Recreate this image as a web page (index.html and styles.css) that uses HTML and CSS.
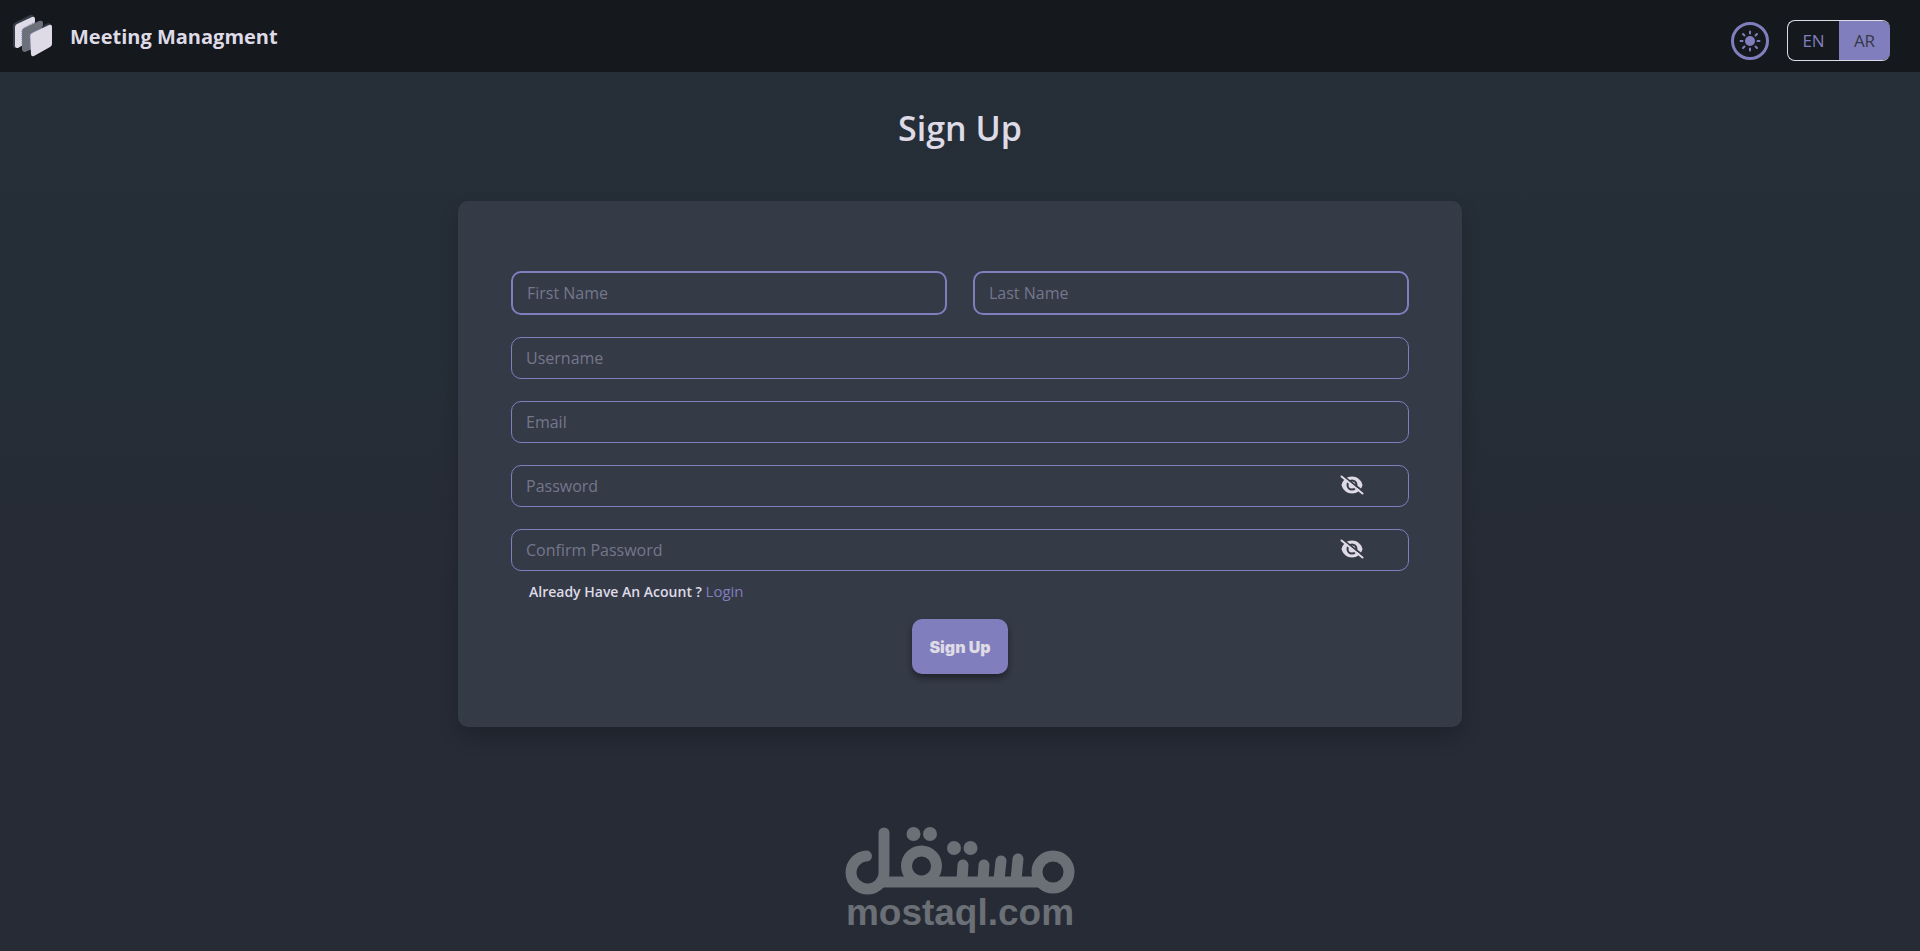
FILE: index.html
```html
<!DOCTYPE html>
<html lang="en">
<head>
  <meta charset="UTF-8">
  <meta name="viewport" content="width=device-width, initial-scale=1.0">
  <title>Sign Up - Meeting Managment</title>
  <link rel="stylesheet" href="styles.css">
</head>
<body>
  <header class="navbar">
    <a class="brand" href="/">
      <svg class="brand-logo" viewBox="0 0 40 44" aria-hidden="true">
        <path class="logo-shade" d="M0 12Q0 9 3 8L17 1Q20 0 21 3V24L2 34Q0 34 0 31Z"/>
        <path class="logo-page" d="M2 13Q2 11 4 10L19 3Q22 2 22 5V24L5 34Q2 34 2 32Z"/>
        <path class="logo-mid" d="M9 17Q9 15 11 14L26 7Q30 6 30 9V30L12 38Q9 38 9 35Z"/>
        <path class="logo-shade" d="M28 13L35 9Q38 9 38 12L30 15Z"/>
        <path class="logo-page" d="M17 22Q17 20 19 19L36 11Q39 10 39 13V30Q39 32 37 33L21 42Q18 43 18 40Z"/>
        <path class="logo-edge" d="M9 30V17Q9 15 11 14L22 8M17 36V22Q17 20 19 19L30 13"/>
      </svg>
      <span>Meeting Managment</span>
    </a>
    <div class="nav-actions">
      <button class="theme-btn" type="button" aria-label="Toggle theme">
        <svg viewBox="0 0 24 24" aria-hidden="true">
          <circle cx="12" cy="12" r="5"/>
          <path d="M12 2.500V4.500M12 19.500V21.500M2.500 12H4.500M19.500 12H21.500M5 5L6.500 6.500M17.500 17.500L19 19M5 19L6.500 17.500M17.500 6.500L19 5"/>
        </svg>
      </button>
      <div class="lang-switch">
        <button type="button">EN</button>
        <button class="active" type="button">AR</button>
      </div>
    </div>
  </header>

  <main>
    <h1>Sign Up</h1>
    <form class="card" id="signup-form">
      <div class="name-row">
        <input class="field thick" name="first_name" type="text" placeholder="First Name" aria-label="First Name">
        <input class="field thick" name="last_name" type="text" placeholder="Last Name" aria-label="Last Name">
      </div>
      <input class="field" name="username" type="text" placeholder="Username" aria-label="Username">
      <input class="field" name="email" type="email" placeholder="Email" aria-label="Email">
      <div class="password">
        <input class="field" name="password" type="password" placeholder="Password" aria-label="Password">
        <button class="eye" type="button" aria-label="Show password">
          <svg viewBox="0 0 24 20" aria-hidden="true">
            <path class="eye-shape" d="M1.500 10C3 4.500 7 1.500 12 1.500S21 4.500 22.500 10C21 15.500 17 18.500 12 18.500S3 15.500 1.500 10Z"/>
            <circle class="eye-ring" cx="12" cy="10" r="4.500"/>
            <path class="eye-gap" d="M3 1L24 17"/>
            <path class="eye-slash" d="M1.500 1.500L22.500 18.500"/>
          </svg>
        </button>
      </div>
      <div class="password">
        <input class="field" name="confirm_password" type="password" placeholder="Confirm Password" aria-label="Confirm Password">
        <button class="eye" type="button" aria-label="Show password">
          <svg viewBox="0 0 24 20" aria-hidden="true">
            <path class="eye-shape" d="M1.500 10C3 4.500 7 1.500 12 1.500S21 4.500 22.500 10C21 15.500 17 18.500 12 18.500S3 15.500 1.500 10Z"/>
            <circle class="eye-ring" cx="12" cy="10" r="4.500"/>
            <path class="eye-gap" d="M3 1L24 17"/>
            <path class="eye-slash" d="M1.500 1.500L22.500 18.500"/>
          </svg>
        </button>
      </div>
      <p class="login-link">Already Have An Acount ? <a href="/login">Login</a></p>
      <button class="submit" type="submit">Sign Up</button>
    </form>
  </main>

  <footer class="watermark">
    <svg viewBox="0 0 230 68" role="img" aria-label="مستقل">
      <path class="stroke" d="M21.500 29A16.500 16.500 0 1 0 39 45V6"/>
      <path class="stroke" d="M36 55H193"/>
      <circle class="stroke" cx="76.500" cy="39" r="15"/>
      <circle class="stroke" cx="208" cy="45" r="16"/>
      <path class="stroke" d="M117 53L118 38M138 53L139 38M154 53L156 34M171 53L173 32"/>
      <circle cx="68.500" cy="7" r="7"/>
      <circle cx="85" cy="7" r="7"/>
      <circle cx="109" cy="21" r="7"/>
      <circle cx="125.500" cy="21" r="7"/>
    </svg>
    <span>mostaql.com</span>
  </footer>
</body>
</html>
```

FILE: styles.css
```css
* { box-sizing: border-box; }
body { font-family: "Open Sans", "Noto Sans", sans-serif; background: linear-gradient(180deg, #262f38 0%, #252e37 35%, #272b36 65%, #272b36 100%); color: #dedae6; margin: 0; min-height: 100vh; display: flex; flex-direction: column; }
button { font-family: inherit; cursor: pointer; }

.navbar { display: flex; align-items: center; justify-content: space-between; height: 72px; padding: 0 30px 0 13px; background: #15181d; }
.brand { display: flex; align-items: center; gap: 17px; color: #dedae6; font-size: 20px; font-weight: 700; text-decoration: none; }
.brand-logo { width: 40px; height: 44px; }
.logo-page { fill: #dedae6; }
.logo-mid { fill: #6b7079; }
.logo-shade { fill: #343a46; }
.logo-edge { fill: none; stroke: #817ebd; stroke-dasharray: 1 1; }
.nav-actions { display: flex; align-items: center; gap: 18px; padding-top: 9px; }
.theme-btn { width: 38px; height: 38px; padding: 4px; border: 3px solid #817ebd; border-radius: 50%; background: none; }
.theme-btn svg { display: block; width: 100%; fill: #817ebd; stroke: #817ebd; stroke-linecap: round; }
.theme-btn circle { stroke: none; }
.theme-btn path { stroke-width: 2; }
.lang-switch { display: flex; border: 1px solid #dedae6; border-right: none; border-radius: 8px; overflow: hidden; }
.lang-switch button { width: 51px; height: 39px; padding: 0; border: none; background: none; color: #817ebd; font-size: 17px; font-weight: 400; }
.lang-switch .active { background: #817ebd; color: #343a46; }

main { width: 1004px; max-width: 100%; margin: 0 auto; }
h1 { margin: 32px 0 48px; font-size: 34px; line-height: 49px; font-weight: 600; text-align: center; }
.card { display: flex; flex-direction: column; gap: 22px; padding: 70px 53px 53px; background: #343a46; border-radius: 10px; box-shadow: 0 10px 20px #0003; }
.name-row { display: grid; grid-template-columns: 1fr 1fr; gap: 26px; }
.field { width: 100%; height: 42px; padding: 0 14px; border: 1px solid #817ebd; border-radius: 10px; background: transparent; color: #dedae6; font-family: inherit; font-size: 16px; font-weight: 400; }
.field.thick { height: 44px; border-width: 2px; }
.field::placeholder { color: #74778c; opacity: 1; }
.password { display: flex; position: relative; }
.eye { position: absolute; top: 10px; right: 45px; width: 24px; height: 20px; padding: 0; border: none; background: none; }
.eye svg { display: block; width: 24px; height: 20px; }
.eye-shape { fill: #dedae6; }
.eye-ring { fill: none; stroke: #343a46; stroke-width: 2; }
.eye-gap { stroke: #343a46; stroke-width: 2; }
.eye-slash { stroke: #dedae6; stroke-width: 2; stroke-linecap: round; }
.login-link { margin: -12px 18px -5px; font-size: 14px; line-height: 20px; font-weight: 600; }
.login-link a { color: #817ebd; font-size: 15px; font-weight: 400; text-decoration: none; }
.submit { align-self: center; width: 96px; height: 55px; padding: 0; border: none; border-radius: 10px; background: #817ebd; color: #dedae6; font-family: Inter, sans-serif; font-size: 16px; font-weight: 900; box-shadow: 0 4px 6px #0006; }

.watermark { display: flex; flex-direction: column; align-items: center; margin-top: 100px; color: #6b6f76; font-family: "Liberation Sans", Arial, sans-serif; font-size: 37px; line-height: 36px; font-weight: 700; }
.watermark svg { width: 230px; height: 68px; fill: #6b6f76; }
.watermark .stroke { fill: none; stroke: #6b6f76; stroke-width: 11; stroke-linecap: round; }
```
